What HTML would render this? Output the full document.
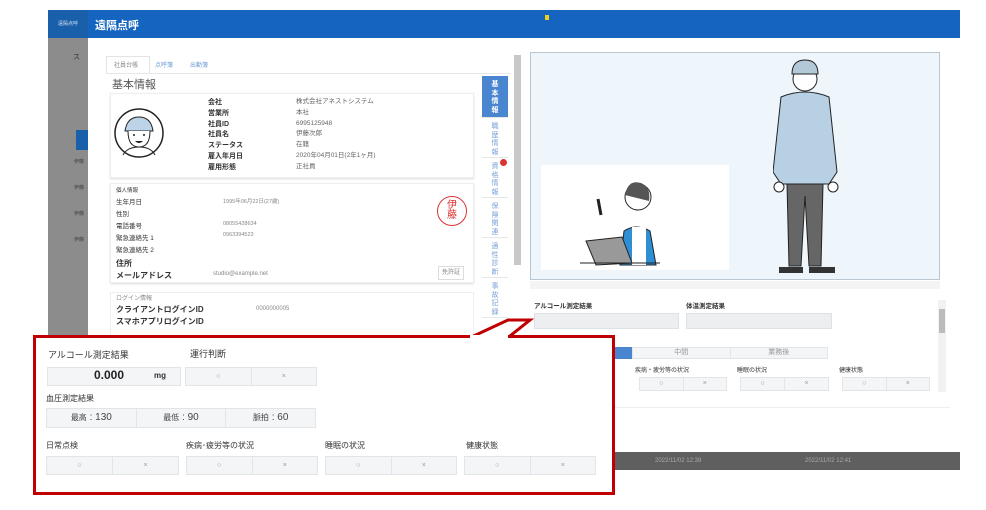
<!DOCTYPE html>
<html><head><meta charset="utf-8"><style>
*{margin:0;padding:0;box-sizing:border-box}
body{width:986px;height:510px;position:relative;background:#fff;font-family:"Liberation Sans","Noto Sans CJK JP",sans-serif;overflow:hidden;color:#333}
.a{position:absolute}
.s{font-size:7px;color:#333}
.g{color:#888}
.btn{position:absolute;background:#f3f5f7;border:1px solid #e2e5e8;display:flex}
.btn div{flex:1;text-align:center;font-size:7px;color:#999;line-height:inherit;border-right:1px solid #e2e5e8}
.btn div:last-child{border-right:none}
.nav div{border-bottom:1px solid #e6e6e6;font-size:7px;color:#7aa3d6;text-align:center;width:26px;padding-top:5px;line-height:8.5px;height:40px}
</style></head><body>
<div class="a" style="left:48px;top:10px;width:912px;height:460px;background:#8c8c8c"></div>
<div class="a" style="left:48px;top:10px;width:912px;height:28px;background:#1a5faa"></div>
<div class="a s" style="left:58px;top:20px;color:#cfe0f5;font-size:5px">遠隔点呼</div>
<div class="a" style="left:76px;top:130px;width:12px;height:20px;background:#1a5faa"></div>
<div class="a s" style="left:73px;top:52px;color:#333">ス</div>
<div class="a s" style="left:74px;top:158px;color:#444;font-size:5px">伊藤</div>
<div class="a s" style="left:74px;top:184px;color:#444;font-size:5px">伊藤</div>
<div class="a s" style="left:74px;top:210px;color:#444;font-size:5px">伊藤</div>
<div class="a s" style="left:74px;top:236px;color:#444;font-size:5px">伊藤</div>
<div class="a" style="left:610px;top:452px;width:350px;height:18px;background:#5f5f5f"></div>
<div class="a" style="left:655px;top:458px;font-size:6px;color:#aaa">2022/11/02 12:39</div>
<div class="a" style="left:805px;top:458px;font-size:6px;color:#aaa">2022/11/02 12:41</div>
<div class="a" style="left:88px;top:10px;width:872px;height:442px;background:#fff"></div>
<div class="a" style="left:88px;top:10px;width:872px;height:28px;background:#1565c0"></div>
<div class="a" style="left:95px;top:17px;color:#fff;font-size:11px;font-weight:bold">遠隔点呼</div>
<div class="a" style="left:545px;top:15px;width:4px;height:5px;background:#f2d01a"></div>
<div class="a" style="left:106px;top:56px;width:44px;height:17px;border:1px solid #e3e3e3;border-bottom:none;background:#fff"></div>
<div class="a s g" style="left:114px;top:60px;font-size:6px">社員台帳</div>
<div class="a s" style="left:155px;top:60px;font-size:6px;color:#6a9ad4">点呼簿</div>
<div class="a s" style="left:190px;top:60px;font-size:6px;color:#6a9ad4">出勤簿</div>
<div class="a" style="left:106px;top:73px;width:405px;height:1px;background:#e8e8e8"></div>
<div class="a" style="left:112px;top:76px;font-size:11px;color:#555">基本情報</div>
<div class="a" style="left:110px;top:93px;width:364px;height:85px;border:1px solid #eee;box-shadow:0 1px 2px #ddd"></div>
<svg class="a" style="left:113px;top:107px" width="52" height="52" viewBox="0 0 52 52"><circle cx="26" cy="26" r="24" fill="#fff" stroke="#222" stroke-width="1.5"/><path d="M12 24q2-14 14-14t14 14z" fill="#bcd3e8" stroke="#222"/><path d="M15 24q0 16 11 16t11-16" fill="#fff" stroke="#222"/><circle cx="21" cy="28" r="1" fill="#222"/><circle cx="31" cy="28" r="1" fill="#222"/><path d="M22 34q4 4 8 0z" fill="#222"/><path d="M10 48q4-8 16-8t16 8" fill="none" stroke="#222"/></svg>
<div class="a s" style="left:208px;top:98px;line-height:10.8px;font-weight:bold">会社<br>営業所<br>社員ID<br>社員名<br>ステータス<br>雇入年月日<br>雇用形態</div>
<div class="a s" style="left:296px;top:97px;line-height:10.8px;font-size:6.5px;color:#666">株式会社アネストシステム<br>本社<br>6995125948<br>伊藤次郎<br>在籍<br>2020年04月01日(2年1ヶ月)<br>正社員</div>
<div class="a" style="left:110px;top:183px;width:364px;height:100px;border:1px solid #eee;box-shadow:0 1px 2px #ddd"></div>
<div class="a s" style="left:116px;top:186px;font-size:5.5px;line-height:11px">個人情報<br><span style="font-size:6.5px">生年月日<br>性別<br>電話番号<br>緊急連絡先 1<br>緊急連絡先 2</span></div>
<div class="a s g" style="left:223px;top:197px;font-size:5.5px;line-height:11px">1995年06月22日(27歳)<br><br>08055428634<br>0963394523</div>
<div class="a" style="left:437px;top:196px;width:30px;height:30px;border:1.5px solid #d33;border-radius:50%;color:#d33;font-size:10px;line-height:10px;text-align:center;padding-top:4px">伊<br>藤</div>
<div class="a s" style="left:116px;top:258px;font-size:8px;line-height:12px;font-weight:bold">住所<br>メールアドレス</div>
<div class="a s g" style="left:213px;top:271px;font-size:6px">studio@example.net</div>
<div class="a" style="left:438px;top:266px;width:26px;height:14px;border:1px solid #ddd;font-size:6px;color:#888;text-align:center;line-height:12px">免許証</div>
<div class="a" style="left:110px;top:292px;width:364px;height:45px;border:1px solid #eee"></div>
<div class="a s g" style="left:116px;top:293px;font-size:6px">ログイン情報</div>
<div class="a s" style="left:116px;top:304px;font-size:8px;font-weight:bold;line-height:12px">クライアントログインID<br>スマホアプリログインID</div>
<div class="a s g" style="left:256px;top:306px;font-size:6px">0000000005</div>
<div class="a nav" style="left:482px;top:76px">
<div style="background:#4a86cf;color:#fff;height:42px;font-weight:bold">基<br>本<br>情<br>報</div>
<div>職<br>歴<br>情<br>報</div>
<div>資<br>格<br>情<br>報</div>
<div>保<br>険<br>関<br>連</div>
<div>適<br>性<br>診<br>断</div>
<div>事<br>故<br>記<br>録</div>
</div>
<div class="a" style="left:500px;top:159px;width:7px;height:7px;border-radius:50%;background:#d33"></div>
<div class="a" style="left:514px;top:55px;width:7px;height:210px;background:#c8c8c8"></div>
<div class="a" style="left:530px;top:52px;width:410px;height:228px;background:#eef5fb;border:1px solid #b9c7d3"></div>
<div class="a" style="left:541px;top:165px;width:188px;height:105px;background:#fff"></div>
<svg class="a" style="left:580px;top:175px" width="90" height="92" viewBox="0 0 90 92"><circle cx="58" cy="22" r="13" fill="#fff" stroke="#222"/><path d="M45 20q3-16 16-12q10 4 8 18z" fill="#555"/><path d="M40 90l4-34q12-8 26 0l6 34z" fill="#2f8fd4" stroke="#222"/><path d="M52 52h14v38h-14z" fill="#fff"/><path d="M18 24l3 16" stroke="#222" stroke-width="3"/><path d="M6 66l36-4 10 26-36 2z" fill="#999" stroke="#222"/><path d="M0 88h80" stroke="#222"/></svg>
<svg class="a" style="left:773px;top:57px" width="70" height="216" viewBox="0 0 70 216"><circle cx="32" cy="22" r="12" fill="#fff" stroke="#222"/><path d="M19 17q0-14 13-14t13 14z" fill="#b4c9d8" stroke="#222"/><path d="M8 40q24-10 48 0l8 75-8 12h-48l-8-12z" fill="#b8d0e4" stroke="#222"/><path d="M14 127h36l-2 82h-12l-4-70-4 70h-12z" fill="#666" stroke="#222"/><path d="M6 210h24v6h-24zM36 210h26v6h-26z" fill="#333"/><circle cx="6" cy="130" r="5" fill="#fff" stroke="#222"/><circle cx="60" cy="130" r="5" fill="#fff" stroke="#222"/></svg>
<div class="a" style="left:530px;top:281px;width:410px;height:8px;background:#f4f4f4"></div>
<div class="a s" style="left:534px;top:300px;font-size:6.5px;font-weight:bold">アルコール測定結果</div>
<div class="a s" style="left:686px;top:300px;font-size:6.5px;font-weight:bold">体温測定結果</div>
<div class="a" style="left:534px;top:313px;width:145px;height:16px;background:#eceef0;border:1px solid #dfe2e5"></div>
<div class="a" style="left:686px;top:313px;width:146px;height:16px;background:#eceef0;border:1px solid #dfe2e5"></div>
<div class="a" style="left:612px;top:347px;width:20px;height:12px;background:#4a86cf"></div>
<div class="btn" style="left:632px;top:347px;width:196px;height:12px;line-height:10px"><div>中間</div><div>業務後</div></div>
<div class="a s" style="left:635px;top:365px;font-size:6px">疾病・疲労等の状況</div>
<div class="a s" style="left:737px;top:365px;font-size:6px">睡眠の状況</div>
<div class="a s" style="left:839px;top:365px;font-size:6px">健康状態</div>
<div class="btn" style="left:639px;top:377px;width:88px;height:14px;line-height:12px"><div>○</div><div>×</div></div>
<div class="btn" style="left:740px;top:377px;width:89px;height:14px;line-height:12px"><div>○</div><div>×</div></div>
<div class="btn" style="left:842px;top:377px;width:88px;height:14px;line-height:12px"><div>○</div><div>×</div></div>
<div class="a" style="left:938px;top:300px;width:8px;height:92px;background:#f2f2f2"></div>
<div class="a" style="left:939px;top:309px;width:6px;height:24px;background:#bbb"></div>
<div class="a" style="left:530px;top:407px;width:420px;height:1px;background:#eee"></div>
<svg class="a" style="left:0;top:0" width="986" height="510"><polygon points="465,340 508,320 530,320 505,340" fill="#fff" stroke="#c00000" stroke-width="3"/></svg>
<div class="a" style="left:33px;top:335px;width:582px;height:160px;border:3px solid #c00000;background:#fff"></div>
<div class="a" style="left:470px;top:335px;width:38px;height:4px;background:#fff"></div>
<div class="a" style="left:48px;top:348px;font-size:9px;color:#333">アルコール測定結果</div>
<div class="a" style="left:190px;top:347px;font-size:9px;color:#333">運行判断</div>
<div class="a" style="left:47px;top:367px;width:134px;height:19px;background:#f3f5f7;border:1px solid #e2e5e8"></div>
<div class="a" style="left:94px;top:368px;font-size:12px;color:#222;font-weight:bold">0.000</div>
<div class="a" style="left:154px;top:371px;font-size:8px;color:#333;font-weight:bold">mg</div>
<div class="btn" style="left:185px;top:367px;width:132px;height:19px;line-height:17px"><div>○</div><div>×</div></div>
<div class="a" style="left:46px;top:393px;font-size:8px;color:#333">血圧測定結果</div>
<div class="btn" style="left:46px;top:408px;width:270px;height:20px;line-height:18px"><div style="font-size:10px;color:#444"><span style="font-size:8px">最高</span> : 130</div><div style="font-size:10px;color:#444"><span style="font-size:8px">最低</span> : 90</div><div style="font-size:10px;color:#444"><span style="font-size:8px">脈拍</span> : 60</div></div>
<div class="a" style="left:46px;top:440px;font-size:8px;color:#333">日常点検</div>
<div class="a" style="left:186px;top:440px;font-size:8px;color:#333">疾病･疲労等の状況</div>
<div class="a" style="left:325px;top:440px;font-size:8px;color:#333">睡眠の状況</div>
<div class="a" style="left:466px;top:440px;font-size:8px;color:#333">健康状態</div>
<div class="btn" style="left:46px;top:456px;width:133px;height:19px;line-height:17px"><div>○</div><div>×</div></div>
<div class="btn" style="left:186px;top:456px;width:132px;height:19px;line-height:17px"><div>○</div><div>×</div></div>
<div class="btn" style="left:325px;top:456px;width:132px;height:19px;line-height:17px"><div>○</div><div>×</div></div>
<div class="btn" style="left:464px;top:456px;width:132px;height:19px;line-height:17px"><div>○</div><div>×</div></div>
</body></html>
